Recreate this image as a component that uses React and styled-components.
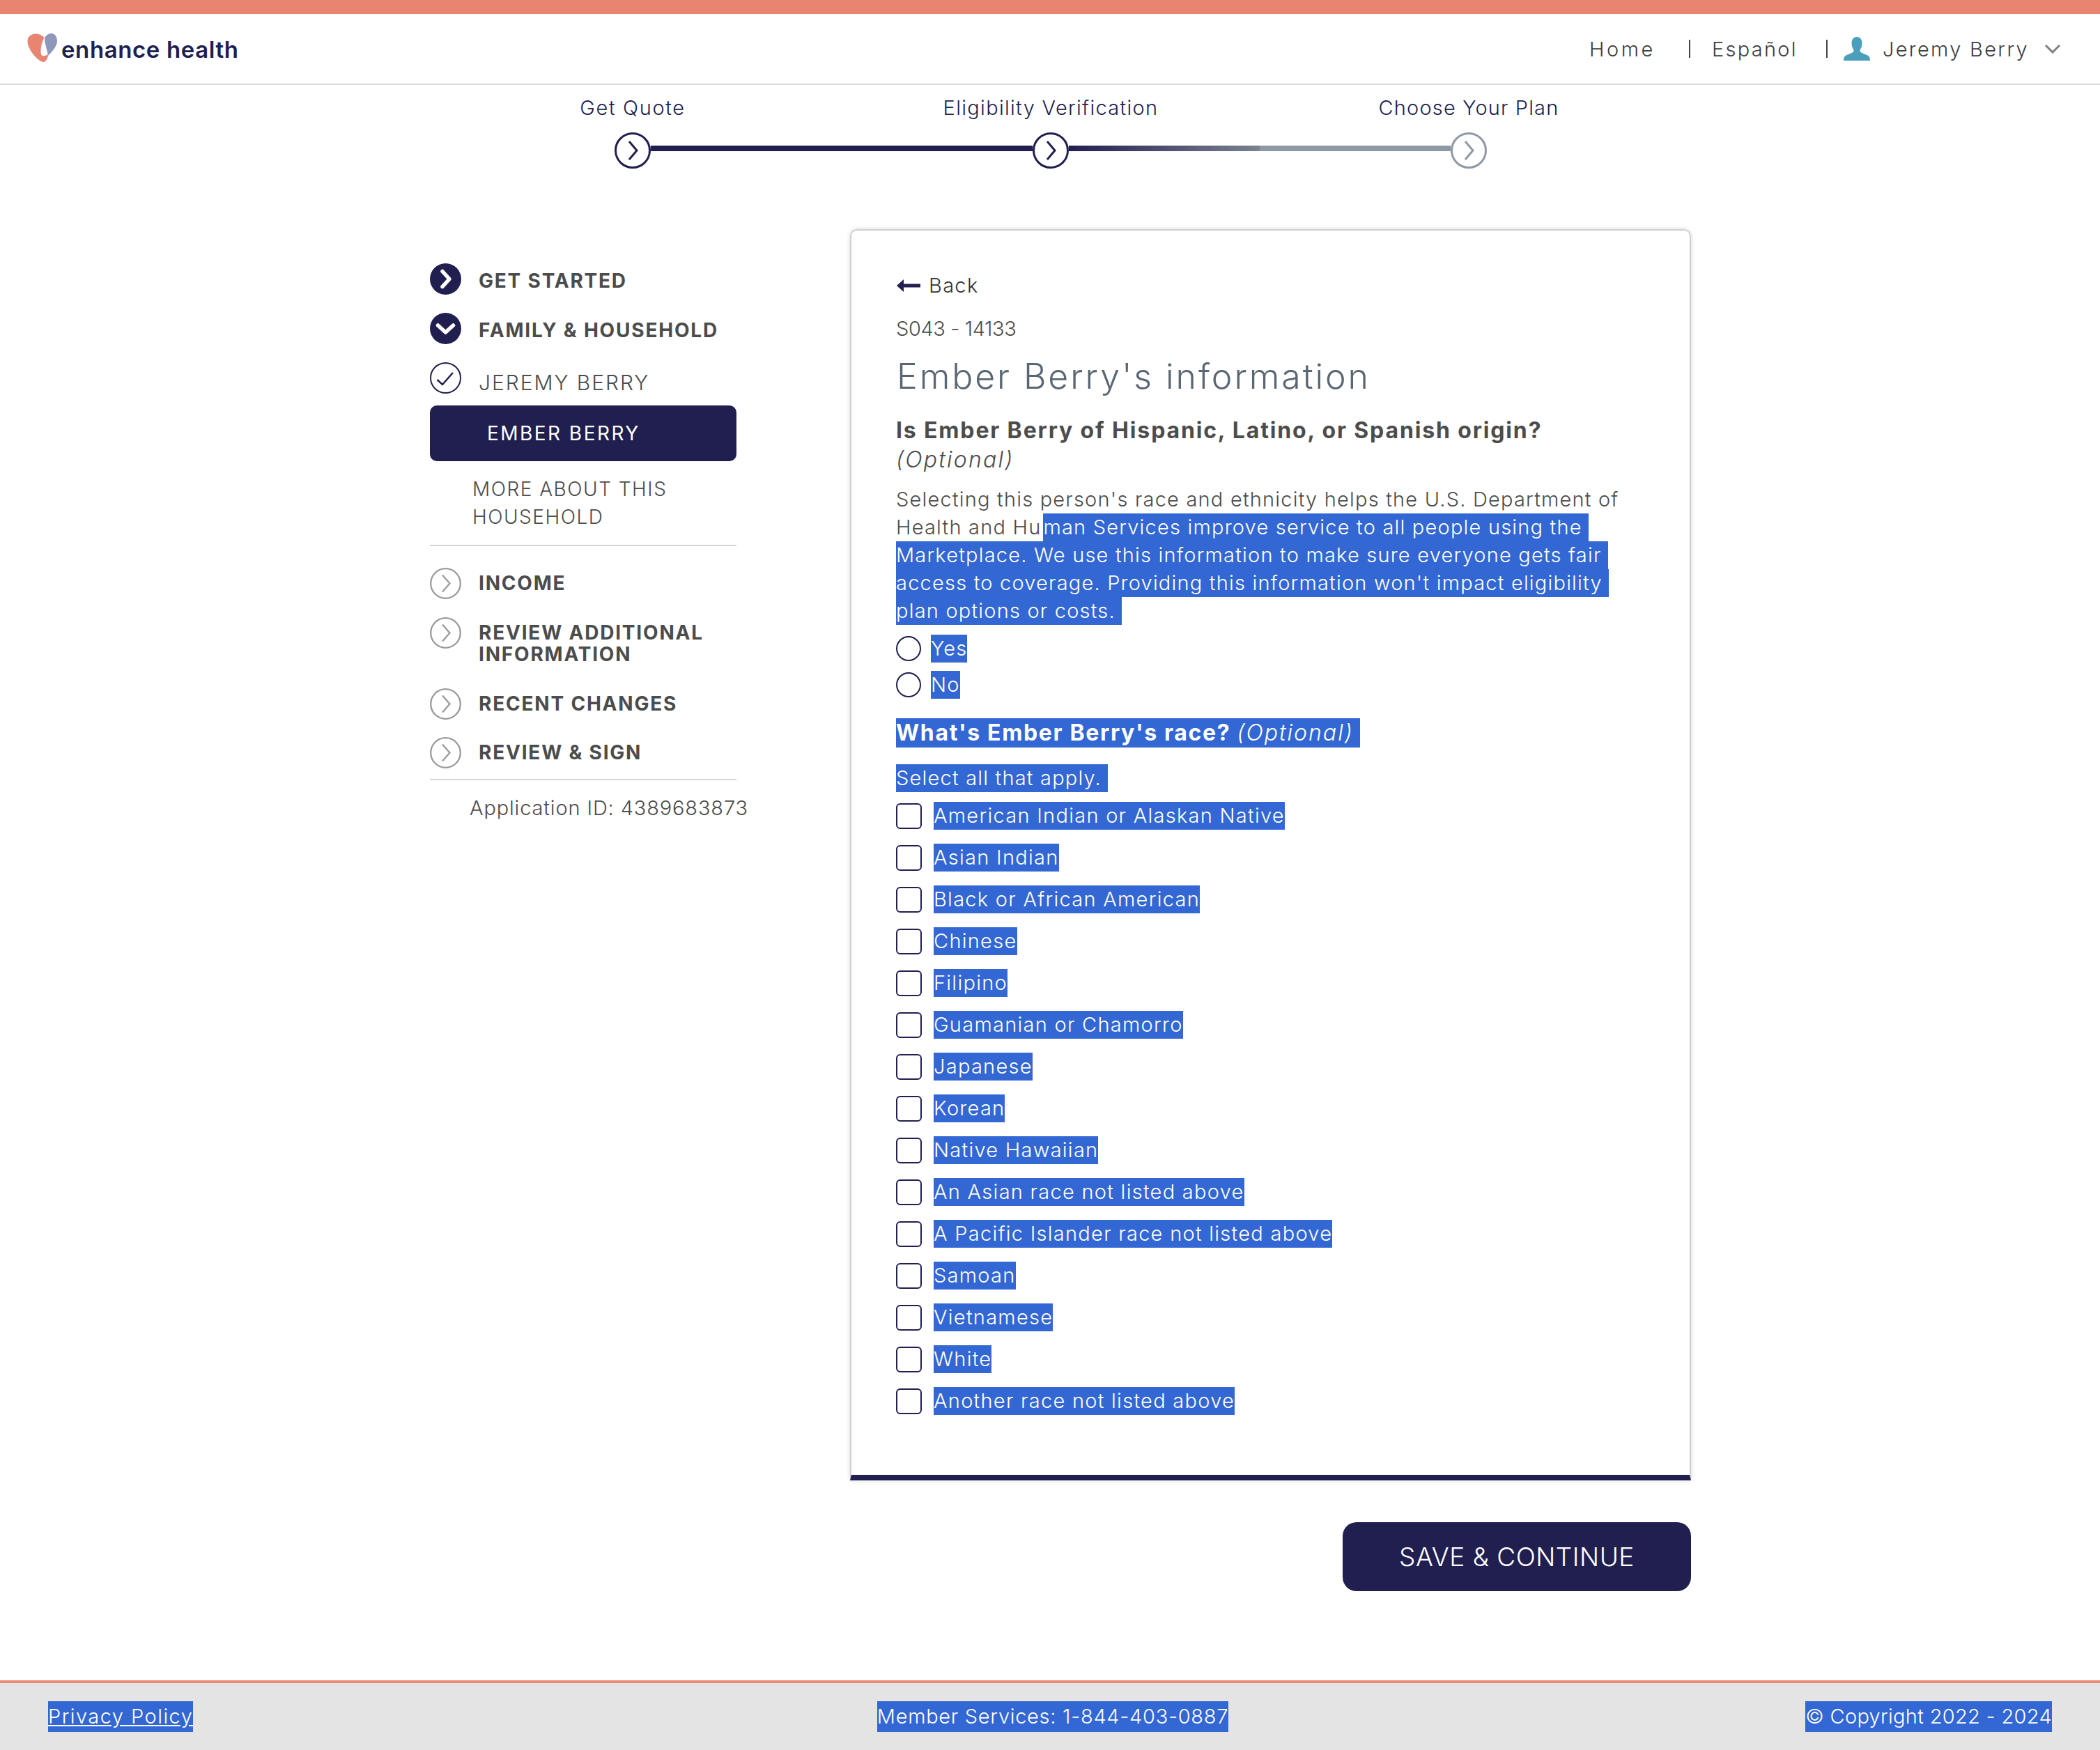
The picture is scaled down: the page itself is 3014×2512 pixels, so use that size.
import React from 'react';
import styled, { createGlobalStyle } from 'styled-components';

const NAVY = '#211f50';
const SALMON = '#e78571';
const HIGHLIGHT = '#3367d3';
const TEXT = '#4c4c4c';
const FONT = 'Inter, "Noto Sans", "Liberation Sans", sans-serif';

const GlobalStyle = createGlobalStyle`
  html, body { margin: 0; padding: 0; background: #fff; }
  body { font-family: ${FONT}; color: ${TEXT}; }
  * { box-sizing: border-box; }
`;

const Page = styled.div`
  display: flex;
  flex-direction: column;
  width: 3014px;
  min-height: 2512px;
`;

/* header */
const Header = styled.header`
  display: flex;
  align-items: center;
  justify-content: space-between;
  height: 122px;
  padding: 0 56px 0 39px;
  border-top: 20px solid ${SALMON};
  border-bottom: 2px solid #d9d9d9;
`;
const Logo = styled.div`
  display: flex;
  align-items: flex-end;
  gap: 6px;
  margin-top: -3px;
`;
const LogoText = styled.span`
  font-size: 33px;
  line-height: 36px;
  font-weight: 600;
  color: ${NAVY};
  letter-spacing: 0.6px;
`;
const Nav = styled.nav`
  display: flex;
  align-items: center;
  font-size: 29px;
  font-weight: 300;
  letter-spacing: 2.3px;
  color: #3d3d3d;
`;
const NavHome = styled.span`
  letter-spacing: 3.5px;
`;
const NavSep = styled.span`
  width: 2px;
  height: 26px;
  margin: 0 ${p => p.$right}px 0 ${p => p.$left}px;
  background: #444;
`;
const NavName = styled.span`
  margin: 0 22px 0 18px;
`;

/* stepper */
const Stepper = styled.div`
  display: flex;
  justify-content: center;
  margin: 13px 0 87px;
  padding-left: 2px;
`;
const Step = styled.div`
  width: 600px;
  display: flex;
  flex-direction: column;
  align-items: center;
`;
const StepLabel = styled.div`
  font-size: 29px;
  font-weight: 300;
  line-height: 40px;
  letter-spacing: ${p => p.$spacing}px;
  color: ${NAVY};
  margin-bottom: 15px;
`;
const StepTrack = styled.div`
  display: flex;
  width: 100%;
`;
const Connector = styled.div`
  flex: 1;
  height: 8px;
  margin-top: 19px;
  background: ${p => p.$fill};
`;

/* main */
const Main = styled.main`
  display: flex;
  padding-left: 617px;
`;
const Sidebar = styled.aside`
  width: 440px;
  margin-right: 163px;
  padding-top: 49px;
  flex-shrink: 0;
`;
const SideItem = styled.div`
  display: flex;
  gap: 25px;
  min-height: 45px;
  margin-bottom: ${p => p.$after}px;
`;
const SideLabel = styled.div`
  font-size: 28px;
  line-height: 31px;
  padding-top: ${p => p.$top}px;
  font-weight: 700;
  letter-spacing: 1.8px;
  color: ${TEXT};
  white-space: nowrap;
`;
const PersonLabel = styled.div`
  font-size: 30px;
  line-height: 40px;
  padding-top: 9px;
  font-weight: 300;
  letter-spacing: 1.95px;
  color: ${TEXT};
  white-space: nowrap;
`;
const ActivePill = styled.div`
  height: 80px;
  padding-left: 82px;
  border-radius: 10px;
  background: ${NAVY};
  color: #fff;
  font-size: 28px;
  line-height: 80px;
  letter-spacing: 2.45px;
`;
const MoreAbout = styled.div`
  margin-top: 20px;
  padding-left: 61px;
  font-size: 28px;
  font-weight: 300;
  line-height: 40px;
  letter-spacing: 1.5px;
  color: ${TEXT};
  white-space: nowrap;
`;
const SideRule = styled.hr`
  height: 2px;
  margin: ${p => p.$top}px 0 ${p => p.$bottom}px;
  border: 0;
  background: #d4d4d4;
`;
const AppId = styled.div`
  padding-left: 57px;
  font-size: 29px;
  font-weight: 300;
  line-height: 40px;
  letter-spacing: 0.85px;
  white-space: nowrap;
`;

/* card */
const Card = styled.section`
  width: 1207px;
  padding: 59px 64px 86px;
  border: 2px solid #cfcfcf;
  border-bottom: 8px solid ${NAVY};
  border-radius: 10px 10px 0 0;
  box-shadow: 0 0 6px rgba(0, 0, 0, 0.16);
`;
const BackLink = styled.div`
  display: flex;
  align-items: center;
  gap: 12px;
  padding-left: 1px;
  font-size: 29px;
  font-weight: 300;
  line-height: 40px;
  letter-spacing: 1.3px;
  color: #333;
`;
const Code = styled.div`
  margin-top: 22px;
  font-size: 29px;
  font-weight: 300;
  line-height: 40px;
  letter-spacing: -0.4px;
`;
const Title = styled.h1`
  margin: 18px 0 0;
  padding-left: 1px;
  font-size: 50px;
  font-weight: 300;
  line-height: 60px;
  letter-spacing: 2.9px;
  color: #5a6673;
`;
const Question = styled.div`
  margin-top: 27px;
  font-size: 32px;
  font-weight: 700;
  line-height: 42px;
  letter-spacing: 1.85px;
`;
const Optional = styled.em`
  display: block;
  font-size: 32px;
  font-weight: 300;
  line-height: 42px;
  letter-spacing: 2.2px;
`;
const Para = styled.div`
  margin: 16px 0 14px;
  font-size: 29px;
  font-weight: 300;
  letter-spacing: 1.2px;
`;
const Line = styled.div`
  height: 40px;
  line-height: 40px;
  white-space: nowrap;
`;
const Plain = styled.span`
  padding-right: 3px;
`;
const Sel = styled.span`
  display: inline-block;
  height: ${p => p.$height || 40}px;
  line-height: ${p => p.$height || 40}px;
  background: ${HIGHLIGHT};
  color: #fff;
  white-space: nowrap;
`;
const RadioRow = styled.label`
  display: flex;
  align-items: center;
  gap: 14px;
  height: 40px;
  margin-bottom: 12px;
  font-size: 29px;
  font-weight: 300;
  letter-spacing: 1.2px;
`;
const RadioMark = styled.span`
  width: 36px;
  height: 36px;
  border: 2px solid ${NAVY};
  border-radius: 50%;
  flex-shrink: 0;
`;
const RaceHeading = styled.div`
  margin-top: 28px;
  font-size: 32px;
`;
const RaceBold = styled.b`
  font-weight: 700;
  letter-spacing: 1.65px;
`;
const RaceOptional = styled.em`
  font-weight: 300;
  letter-spacing: 2px;
`;
const SelectAll = styled.div`
  margin: 24px 0 14px;
  font-size: 29px;
  font-weight: 300;
  letter-spacing: 1.2px;
`;
const CheckList = styled.div`
  display: flex;
  flex-direction: column;
  gap: 20px;
`;
const CheckRow = styled.label`
  display: flex;
  align-items: center;
  gap: 17px;
  height: 40px;
  font-size: 29px;
  font-weight: 300;
  letter-spacing: 1.27px;
`;
const CheckMark = styled.span`
  width: 37px;
  height: 37px;
  border: 2px solid ${NAVY};
  border-radius: 6px;
  flex-shrink: 0;
`;
const Actions = styled.div`
  display: flex;
  justify-content: flex-end;
  width: 1207px;
  margin-top: 60px;
`;
const SaveButton = styled.button`
  width: 500px;
  height: 99px;
  border: 0;
  border-radius: 20px;
  background: ${NAVY};
  color: #fff;
  font-family: ${FONT};
  font-size: 37px;
  font-weight: 300;
  letter-spacing: 0.5px;
`;

/* footer */
const Footer = styled.footer`
  display: grid;
  grid-template-columns: 1fr auto 1fr;
  align-items: center;
  height: 100px;
  margin-top: auto;
  padding: 0 69px;
  border-top: 4px solid #ea8975;
  background: #e4e4e4;
  font-size: 29px;
  font-weight: 300;
`;
const FootLeft = styled.div`
  justify-self: start;
`;
const FootCenter = styled.div`
  margin-left: 8px;
`;
const FootRight = styled.div`
  justify-self: end;
`;
const FootSel = styled.span`
  display: inline-block;
  height: 44px;
  line-height: 44px;
  background: ${HIGHLIGHT};
  color: #fff;
  letter-spacing: ${p => p.$spacing}px;
  text-decoration: ${p => (p.$link ? 'underline' : 'none')};
`;

/* drawings */
const HeartLogo = () => (
  <svg width="43" height="41" viewBox="0 0 43 41">
    <path fill="#e78571" d="M0.5 11C0.5 3 8 0 14 0.5C18 1 22 3 24.5 6C21 12 18.5 22 20 30C21 33 25 33 30 30C30 36 27 41 23 41C16 40 0.5 24 0.5 11Z" />
    <path fill="#8e98bd" d="M25 7C27 2 31 0 35 0C40 0 43 5 43 11C43 18 36 26 30 32C29 24 25 15 25 7Z" />
  </svg>
);

const UserIcon = () => (
  <svg width="38" height="34" viewBox="0 0 38 34">
    <path fill="#4a9fbc" d="M19 0C24 0 26.500 4 26.500 9C26.500 14 24.500 17 23.500 19C23 21.500 26 23 31 25C35.500 26.500 38 28 38 34L0 34C0 28 2.500 26.500 7 25C12 23 15 21.500 14.500 19C13.500 17 11.500 14 11.500 9C11.500 4 14 0 19 0Z" />
  </svg>
);

const NavChevron = () => (
  <svg width="24" height="14" viewBox="0 0 24 14">
    <path d="M2 2L12 12L22 2" fill="none" stroke="#808080" strokeWidth="3" />
  </svg>
);

const StepCircle = ({ color }) => (
  <svg width="52" height="52" viewBox="0 0 52 52" style={{ flexShrink: 0 }}>
    <circle cx="26" cy="26" r="24.500" fill="#fff" stroke={color} strokeWidth="3" />
    <path d="M21 13L32 26L21 39" fill="none" stroke={color} strokeWidth="3" />
  </svg>
);

const FilledChevron = ({ down }) => (
  <svg width="45" height="45" viewBox="0 0 45 45" style={{ flexShrink: 0 }}>
    <circle cx="22.500" cy="22.500" r="22.500" fill={NAVY} />
    <path d={down ? 'M11.500 18L22.500 28L33.500 18' : 'M18 11.500L28 22.500L18 33.500'} fill="none" stroke="#fff" strokeWidth="5.500" strokeLinecap="round" strokeLinejoin="round" />
  </svg>
);

const CheckCircle = () => (
  <svg width="45" height="45" viewBox="0 0 45 45" style={{ flexShrink: 0 }}>
    <circle cx="22.500" cy="22.500" r="21.500" fill="none" stroke={NAVY} strokeWidth="2" />
    <path d="M10.500 25L18 32L33 15" fill="none" stroke={NAVY} strokeWidth="2.500" />
  </svg>
);

const GreyChevron = () => (
  <svg width="45" height="45" viewBox="0 0 45 45" style={{ flexShrink: 0 }}>
    <circle cx="22.500" cy="22.500" r="21.300" fill="none" stroke="#9a9a9a" strokeWidth="2.300" />
    <path d="M18 10.500L28.500 22.500L18 34.500" fill="none" stroke="#9a9a9a" strokeWidth="2.300" />
  </svg>
);

const BackArrow = () => (
  <svg width="34" height="18" viewBox="0 0 34 18">
    <path fill={NAVY} d="M0 9L10 0V6.500H34V11.500H10V18Z" />
  </svg>
);

const races = [
  'American Indian or Alaskan Native',
  'Asian Indian',
  'Black or African American',
  'Chinese',
  'Filipino',
  'Guamanian or Chamorro',
  'Japanese',
  'Korean',
  'Native Hawaiian',
  'An Asian race not listed above',
  'A Pacific Islander race not listed above',
  'Samoan',
  'Vietnamese',
  'White',
  'Another race not listed above',
];

export default function App() {
  return (
    <Page>
      <GlobalStyle />
      <Header>
        <Logo>
          <HeartLogo />
          <LogoText>enhance health</LogoText>
        </Logo>
        <Nav>
          <NavHome>Home</NavHome>
          <NavSep $left={48} $right={31} />
          <span>Español</span>
          <NavSep $left={41} $right={23} />
          <UserIcon />
          <NavName>Jeremy Berry</NavName>
          <NavChevron />
        </Nav>
      </Header>

      <Stepper>
        <Step>
          <StepLabel $spacing={1.65}>Get Quote</StepLabel>
          <StepTrack>
            <Connector $fill="transparent" />
            <StepCircle color={NAVY} />
            <Connector $fill={NAVY} />
          </StepTrack>
        </Step>
        <Step>
          <StepLabel $spacing={1.3}>Eligibility Verification</StepLabel>
          <StepTrack>
            <Connector $fill={NAVY} />
            <StepCircle color={NAVY} />
            <Connector $fill={`linear-gradient(to right, ${NAVY}, #7b8290)`} />
          </StepTrack>
        </Step>
        <Step>
          <StepLabel $spacing={1.15}>Choose Your Plan</StepLabel>
          <StepTrack>
            <Connector $fill="#8f99a5" />
            <StepCircle color="#8f99a5" />
            <Connector $fill="transparent" />
          </StepTrack>
        </Step>
      </Stepper>

      <Main>
        <Sidebar>
          <SideItem $after={26}>
            <FilledChevron />
            <SideLabel $top={10}>GET STARTED</SideLabel>
          </SideItem>
          <SideItem $after={26}>
            <FilledChevron down />
            <SideLabel $top={10}>FAMILY &amp; HOUSEHOLD</SideLabel>
          </SideItem>
          <SideItem $after={13}>
            <CheckCircle />
            <PersonLabel>JEREMY BERRY</PersonLabel>
          </SideItem>
          <ActivePill>EMBER BERRY</ActivePill>
          <MoreAbout>MORE ABOUT THIS<br />HOUSEHOLD</MoreAbout>
          <SideRule $top={20} $bottom={31} />
          <SideItem $after={26}>
            <GreyChevron />
            <SideLabel $top={7}>INCOME</SideLabel>
          </SideItem>
          <SideItem $after={33}>
            <GreyChevron />
            <SideLabel $top={7}>REVIEW ADDITIONAL<br />INFORMATION</SideLabel>
          </SideItem>
          <SideItem $after={25}>
            <GreyChevron />
            <SideLabel $top={7}>RECENT CHANGES</SideLabel>
          </SideItem>
          <SideItem $after={15}>
            <GreyChevron />
            <SideLabel $top={7}>REVIEW &amp; SIGN</SideLabel>
          </SideItem>
          <SideRule $top={0} $bottom={20} />
          <AppId>Application ID: 4389683873</AppId>
        </Sidebar>

        <div>
          <Card>
            <BackLink><BackArrow />Back</BackLink>
            <Code>S043 - 14133</Code>
            <Title>Ember Berry's information</Title>
            <Question>Is Ember Berry of Hispanic, Latino, or Spanish origin?</Question>
            <Optional>(Optional)</Optional>
            <Para>
              <Line><Plain>Selecting this person's race and ethnicity helps the U.S. Department of</Plain></Line>
              <Line><Plain>Health and Hu</Plain><Sel>man Services improve service to all people using the&nbsp;</Sel></Line>
              <Line><Sel>Marketplace. We use this information to make sure everyone gets fair&nbsp;</Sel></Line>
              <Line><Sel>access to coverage. Providing this information won't impact eligibility&nbsp;</Sel></Line>
              <Line><Sel>plan options or costs.&nbsp;</Sel></Line>
            </Para>
            <RadioRow><RadioMark /><Sel>Yes</Sel></RadioRow>
            <RadioRow><RadioMark /><Sel>No</Sel></RadioRow>
            <RaceHeading>
              <Sel $height={42}><RaceBold>What's Ember Berry's race?</RaceBold> <RaceOptional>(Optional)</RaceOptional>&nbsp;</Sel>
            </RaceHeading>
            <SelectAll><Sel>Select all that apply.&nbsp;</Sel></SelectAll>
            <CheckList>
              {races.map(race => (
                <CheckRow key={race}><CheckMark /><Sel>{race}</Sel></CheckRow>
              ))}
            </CheckList>
          </Card>
          <Actions>
            <SaveButton>SAVE &amp; CONTINUE</SaveButton>
          </Actions>
        </div>
      </Main>

      <Footer>
        <FootLeft><FootSel $link $spacing={1.45}>Privacy Policy</FootSel></FootLeft>
        <FootCenter><FootSel $spacing={0.7}>Member Services: 1-844-403-0887</FootSel></FootCenter>
        <FootRight><FootSel $spacing={0.3}>© Copyright 2022 - 2024</FootSel></FootRight>
      </Footer>
    </Page>
  );
}
